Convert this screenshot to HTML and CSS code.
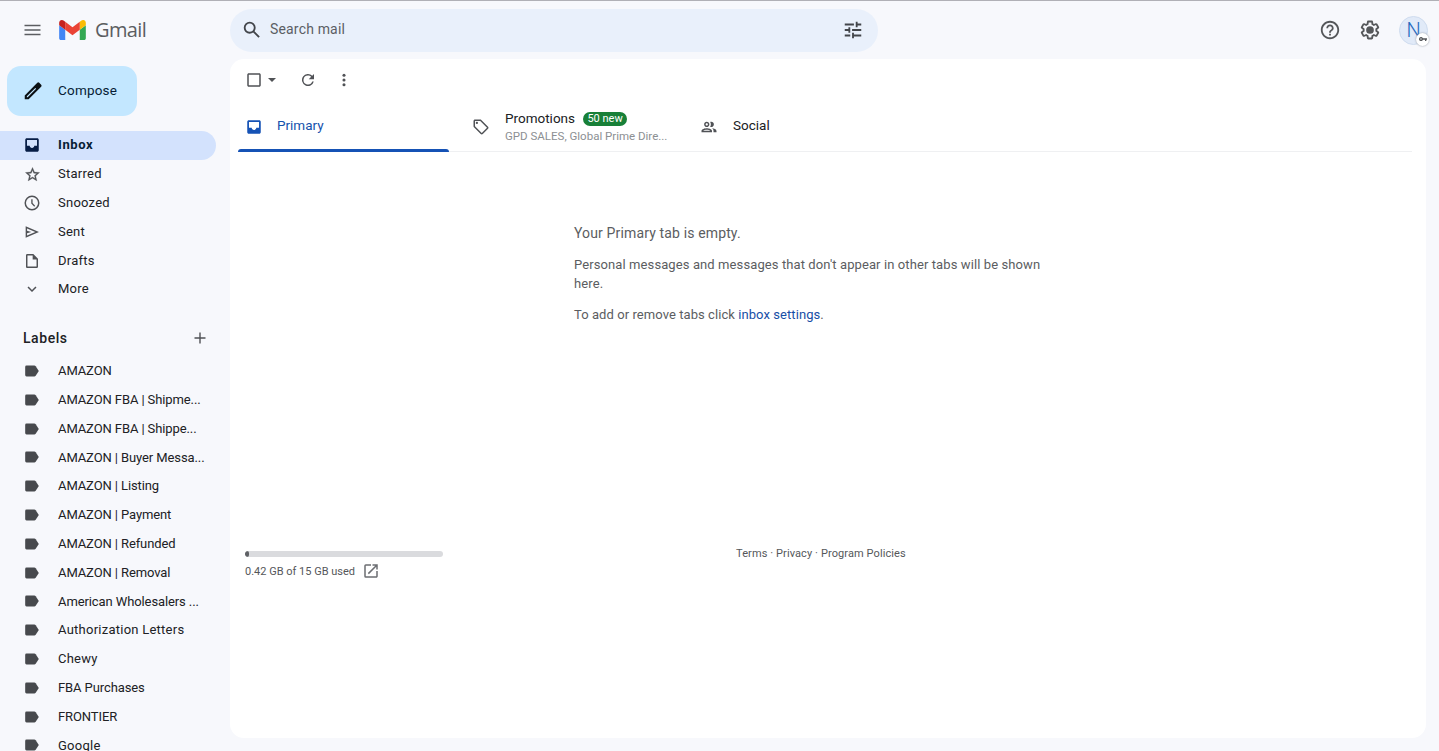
FILE: index.html
```html
<!DOCTYPE html>
<html lang="en">
<head>
<meta charset="utf-8">
<title>Gmail</title>
<link rel="stylesheet" href="styles.css">
</head>
<body>
<svg class="defs" aria-hidden="true">
  <symbol id="label" viewBox="0 0 14 12"><path d="M1.500 .6H9.300Q10.200 .6 10.700 1.300L13.800 6 10.700 10.700Q10.200 11.400 9.300 11.400H1.500Q.2 11.400 .2 10.100V1.900Q.2 .6 1.500 .6Z"/></symbol>
  <symbol id="inbox" viewBox="0 0 24 24"><path d="M19 3H5c-1.100 0-2 .9-2 2v14c0 1.100.9 2 2 2h14c1.100 0 2-.9 2-2V5c0-1.100-.9-2-2-2zm-.3 10H15c0 1.660-1.350 3-3 3s-3-1.340-3-3H5.300V5.300h13.400V13z"/></symbol>
</svg>
<div class="app">
  <header class="header">
    <div class="brand">
      <svg class="menu-icon" viewBox="0 0 18 14"><path d="M.5 2.500h16M.5 7h16M.5 11.500h16"/></svg>
      <svg class="logo" viewBox="52 42 88 66"><path fill="#4285f4" d="M58 108h14V74L52 59v43c0 3.320 2.690 6 6 6"/><path fill="#34a853" d="M120 108h14c3.320 0 6-2.690 6-6V59l-20 15"/><path fill="#fbbc04" d="M120 48v26l20-15v-8c0-7.420-8.470-11.650-14.400-7.200"/><path fill="#ea4335" d="M72 74V48l24 18 24-18v26L96 92"/><path fill="#c5221f" d="M52 51v8l20 15V48l-5.600-4.200c-5.940-4.450-14.400-.22-14.400 7.200"/></svg>
      <span class="wordmark">Gmail</span>
    </div>
    <div class="search">
      <svg class="icon search-icon" viewBox="0 0 24 24"><path d="M20.490 19l-5.730-5.730C15.530 12.200 16 10.910 16 9.500A6.500 6.500 0 1 0 9.500 16c1.410 0 2.700-.47 3.770-1.240L19 20.490 20.490 19zM5 9.500C5 7.010 7.010 5 9.500 5S14 7.010 14 9.500 11.990 14 9.500 14 5 11.990 5 9.500z"/></svg>
      <span class="search-text">Search mail</span>
      <svg class="icon tune-icon" viewBox="0 0 24 24"><path d="M3 17v2h6v-2H3zM3 5v2h10V5H3zm10 16v-2h8v-2h-8v-2h-2v6h2zM7 9v2H3v2h4v2h2V9H7zm14 4v-2H11v2h10zm-6-4h2V7h4V5h-4V3h-2v6z"/></svg>
    </div>
    <div class="account">
      <svg class="icon help" viewBox="0 0 24 24"><path d="M11 18h2v-2h-2v2zm1-16C6.480 2 2 6.480 2 12s4.480 10 10 10 10-4.480 10-10S17.520 2 12 2zm0 18c-4.410 0-8-3.590-8-8s3.590-8 8-8 8 3.590 8 8-3.590 8-8 8zm0-14c-2.210 0-4 1.790-4 4h2c0-1.100.9-2 2-2s2 .9 2 2c0 2-3 1.750-3 5h2c0-2.250 3-2.500 3-5 0-2.210-1.790-4-4-4z"/></svg>
      <svg class="icon gear" viewBox="0 0 24 24"><path d="M13.850 22.250h-3.700c-.74 0-1.360-.54-1.450-1.270l-.27-1.890c-.27-.14-.53-.29-.79-.46l-1.800.72c-.7.26-1.470-.03-1.810-.65L2.200 15.530c-.35-.66-.2-1.440.36-1.880l1.530-1.190c-.01-.15-.02-.3-.02-.46 0-.15.010-.31.020-.46l-1.520-1.190c-.59-.45-.74-1.260-.37-1.880l1.850-3.190c.34-.62 1.110-.9 1.790-.63l1.810.73c.26-.17.52-.32.780-.46l.27-1.910c.09-.7.710-1.250 1.440-1.250h3.700c.74 0 1.360.54 1.450 1.270l.27 1.890c.27.140.53.290.79.460l1.800-.72c.71-.26 1.480.03 1.820.65l1.840 3.180c.36.660.2 1.440-.36 1.880l-1.520 1.190c.01.150.02.300.02.460s-.01.310-.02.460l1.520 1.190c.56.450.72 1.230.37 1.860l-1.860 3.220c-.34.620-1.110.9-1.800.63l-1.800-.72c-.26.170-.52.320-.78.460l-.27 1.910c-.1.680-.72 1.220-1.460 1.220zm-3.230-2h2.760l.37-2.550.53-.22c.44-.18.880-.44 1.340-.78l.45-.34 2.380.96 1.380-2.400-2.030-1.580.07-.56c.03-.26.060-.51.060-.78s-.03-.53-.06-.78l-.07-.56 2.030-1.580-1.390-2.400-2.390.96-.45-.35c-.42-.32-.87-.58-1.330-.77l-.52-.22-.37-2.550h-2.760l-.37 2.550-.53.210c-.44.190-.88.440-1.340.79l-.45.330-2.380-.95-1.390 2.390 2.030 1.580-.07.56c-.03.260-.06.530-.06.790s.02.530.06.780l.07.56-2.030 1.580 1.380 2.400 2.390-.96.450.35c.43.330.86.580 1.330.77l.53.22.38 2.550z"/><circle cx="12" cy="12" r="4.200"/></svg>
      <div class="avatar">N<span class="key-badge"><svg viewBox="0 0 12 6"><path fill-rule="evenodd" d="M3 0a3 3 0 0 1 2.800 2H12v2h-1v2H9V4H5.800A3 3 0 1 1 3 0zM3 2a1 1 0 1 0 0 2 1 1 0 0 0 0-2z"/></svg></span></div>
    </div>
  </header>
  <div class="body">
    <aside class="sidebar">
      <button class="compose"><svg class="pencil" viewBox="0 0 24 24"><path fill-rule="evenodd" d="M3 16.800V21h4.200L20.900 7.300a1.500 1.500 0 0 0 0-2.100l-2.100-2.100a1.500 1.500 0 0 0-2.100 0L3 16.800zM5.300 18.800v-1L14.500 8.600l.9.900L6.200 18.800z"/></svg><span>Compose</span></button>
      <nav class="nav">
        <a class="row active"><svg class="icon"><use href="#inbox"/></svg><span>Inbox</span></a>
        <a class="row"><svg class="icon star" viewBox="0 0 24 24"><path d="M22 9.240l-7.190-.62L12 2 9.190 8.630 2 9.240l5.460 4.730L5.820 21 12 17.270 18.180 21l-1.630-7.030L22 9.240zM12 15.400l-3.760 2.270 1-4.280-3.320-2.880 4.380-.38L12 6.100l1.710 4.040 4.380.38-3.320 2.880 1 4.280L12 15.400z"/></svg><span class="lift">Starred</span></a>
        <a class="row"><svg class="icon" viewBox="0 0 24 24"><path d="M12 2a10 10 0 1 0 0 20 10 10 0 0 0 0-20zm0 18a8 8 0 1 1 0-16 8 8 0 0 1 0 16zM12.800 7H11v5.700l4 4.200 1.200-1.200-3.400-3.700z"/></svg><span>Snoozed</span></a>
        <a class="row"><svg class="icon small" viewBox="0 0 24 24"><path fill-rule="evenodd" d="M2.500 3.500v17L22.500 12zM4.600 6.700 17 12 4.600 17.300v-3.600L11 12l-6.400-1.700z"/></svg><span>Sent</span></a>
        <a class="row"><svg class="icon small" viewBox="0 0 24 24"><path d="M14 1.500H5a2 2 0 0 0-2 2v17c0 1.100.9 2 2 2h14a2 2 0 0 0 2-2V8.500zM5.200 20.300V3.700H13v6h5.800v10.600z"/></svg><span>Drafts</span></a>
        <a class="row"><svg class="icon" viewBox="0 0 24 24"><path d="M12 16l-6-6 1.410-1.410L12 13.170l4.590-4.590L18 10z"/></svg><span class="lift">More</span></a>
      </nav>
      <div class="labels-head"><h2>Labels</h2><svg viewBox="0 0 12 12"><path d="M6 .5v11M.5 6h11"/></svg></div>
      <nav class="nav labels">
        <a class="row caps"><svg class="tag"><use href="#label"/></svg><span>AMAZON</span></a>
        <a class="row caps"><svg class="tag"><use href="#label"/></svg><span>AMAZON FBA | Shipme...</span></a>
        <a class="row caps"><svg class="tag"><use href="#label"/></svg><span>AMAZON FBA | Shippe...</span></a>
        <a class="row caps"><svg class="tag"><use href="#label"/></svg><span>AMAZON | Buyer Messa...</span></a>
        <a class="row caps"><svg class="tag"><use href="#label"/></svg><span>AMAZON | Listing</span></a>
        <a class="row caps"><svg class="tag"><use href="#label"/></svg><span>AMAZON | Payment</span></a>
        <a class="row caps"><svg class="tag"><use href="#label"/></svg><span>AMAZON | Refunded</span></a>
        <a class="row caps"><svg class="tag"><use href="#label"/></svg><span>AMAZON | Removal</span></a>
        <a class="row caps"><svg class="tag"><use href="#label"/></svg><span>American Wholesalers ...</span></a>
        <a class="row"><svg class="tag"><use href="#label"/></svg><span>Authorization Letters</span></a>
        <a class="row"><svg class="tag"><use href="#label"/></svg><span>Chewy</span></a>
        <a class="row caps"><svg class="tag"><use href="#label"/></svg><span>FBA Purchases</span></a>
        <a class="row caps"><svg class="tag"><use href="#label"/></svg><span>FRONTIER</span></a>
        <a class="row"><svg class="tag"><use href="#label"/></svg><span>Google</span></a>
      </nav>
    </aside>
    <main class="panel">
      <div class="toolbar">
        <svg class="icon" viewBox="0 0 24 24"><path d="M19 5v14H5V5h14m0-2H5c-1.100 0-2 .9-2 2v14c0 1.100.9 2 2 2h14c1.100 0 2-.9 2-2V5c0-1.100-.9-2-2-2z"/></svg>
        <svg class="caret" viewBox="0 0 8 4"><path d="M0 0h8L4 4z"/></svg>
        <svg class="icon refresh" viewBox="0 0 24 24"><path d="M17.650 6.350A8 8 0 1 0 19.730 14h-2.080A6 6 0 1 1 12 6c1.660 0 3.140.69 4.220 1.780L13 11h7V4z"/></svg>
        <svg class="icon dots" viewBox="0 0 24 24"><circle cx="12" cy="5" r="2.300"/><circle cx="12" cy="12" r="2.300"/><circle cx="12" cy="19" r="2.300"/></svg>
      </div>
      <div class="tabs">
        <div class="tab selected"><svg class="icon"><use href="#inbox"/></svg><span>Primary</span></div>
        <div class="tab"><svg class="icon" viewBox="0 0 24 24"><path d="M21.410 11.580l-9-9C12.050 2.220 11.550 2 11 2H4c-1.100 0-2 .9-2 2v7c0 .55.220 1.050.59 1.420l9 9c.36.360.86.580 1.410.58s1.050-.22 1.410-.59l7-7c.37-.36.590-.86.590-1.410s-.23-1.060-.59-1.420zM13 20.010L4 11V4h7v-.01l9 9-7 7.020z"/><circle cx="6.500" cy="6.500" r="1.500"/></svg>
          <div class="tab-copy"><div class="tab-line"><span>Promotions</span><span class="pill">50 new</span></div><div class="senders">GPD SALES, Global Prime Dire...</div></div></div>
        <div class="tab"><svg class="icon people" viewBox="0 0 24 24"><path d="M9 12c1.930 0 3.500-1.570 3.500-3.500S10.930 5 9 5 5.500 6.570 5.500 8.500 7.070 12 9 12zm0-5c.83 0 1.500.67 1.500 1.500S9.830 10 9 10s-1.500-.67-1.500-1.500S8.170 7 9 7zm0 6.750c-2.340 0-7 1.170-7 3.500V19h14v-1.750c0-2.330-4.660-3.500-7-3.500zM4.340 17c.84-.58 2.870-1.250 4.660-1.250s3.820.67 4.660 1.250H4.340zm11.700-3.190c1.160.84 1.960 1.960 1.960 3.440V19h4v-1.750c0-2.020-3.500-3.170-5.960-3.440zM15 12c1.930 0 3.500-1.570 3.500-3.500S16.930 5 15 5c-.54 0-1.040.13-1.500.35.63.89 1 1.980 1 3.150s-.37 2.260-1 3.150c.46.220.96.350 1.500.35z"/></svg><span>Social</span></div>
      </div>
      <section class="empty">
        <p class="lead">Your Primary tab is empty.</p>
        <p class="detail">Personal messages and messages that don't appear in other tabs will be shown<br>here.</p>
        <p class="hint">To add or remove tabs click <a>inbox settings</a>.</p>
      </section>
      <footer class="footer">
        <div class="storage">
          <div class="meter"><i></i></div>
          <div class="usage"><span>0.42 GB of 15 GB used</span><svg class="icon" viewBox="0 0 24 24"><path d="M19 19H5V5h7V3H5a2 2 0 0 0-2 2v14a2 2 0 0 0 2 2h14c1.100 0 2-.9 2-2v-7h-2v7zM14 3v2h3.590l-9.830 9.830 1.410 1.410L19 6.410V10h2V3h-7z"/></svg></div>
        </div>
        <div class="legal">Terms · Privacy · Program Policies</div>
      </footer>
    </main>
  </div>
</div>
</body>
</html>
```
FILE: styles.css
```css
* { box-sizing: border-box; }
body { margin: 0; background: #f7f8fc; font-family: Roboto, "Liberation Sans", sans-serif; color: #202124; overflow: hidden; }
h2, p { margin: 0; }
svg { display: block; flex: none; }
.defs { display: none; }
.icon { width: 18px; height: 18px; fill: #505256; }
.app { height: 751px; overflow: hidden; border-top: 1px solid #b0b0b6; display: flex; flex-direction: column; }

.header { height: 58px; flex: none; display: flex; align-items: center; }
.brand { width: 230px; padding-left: 24px; display: flex; align-items: center; }
.menu-icon { width: 18px; height: 14px; stroke: #5b5d61; stroke-width: 1.5; }
.logo { width: 27px; height: 20px; margin-left: 17px; }
.wordmark { margin-left: 9px; font: 500 20px/24px "Open Sans", sans-serif; color: #5b5d61; letter-spacing: -.6px; }
.search { width: 648px; height: 43px; padding: 0 16px 0 11px; border-radius: 22px; background: #e9f0fb; display: flex; align-items: center; }
.search-icon { width: 22px; height: 22px; fill: #42454a; margin-right: 7px; }
.search-text { font-size: 14px; color: #5b5e64; letter-spacing: .17px; padding-bottom: 2px; }
.tune-icon { width: 22px; height: 22px; fill: #42454a; margin-left: auto; margin-right: -2px; }
.account { margin-left: auto; padding-right: 11px; display: flex; align-items: center; }
.help, .gear { width: 22px; height: 22px; fill: #55575a; }
.gear { margin-left: 18px; }
.avatar { position: relative; width: 29px; height: 29px; margin-left: 18px; border: 1px solid #cfdcef; border-radius: 50%; background: #e1eaf8; color: #2468bd; font-size: 20px; font-weight: 300; line-height: 26px; text-align: center; }
.key-badge { position: absolute; right: -2px; bottom: -2px; width: 13px; height: 13px; border-radius: 50%; background: #fff; box-shadow: 0 0 2px #8b909a; display: grid; place-items: center; }
.key-badge svg { width: 8px; height: 4px; fill: #55575a; }

.body { flex: 1; min-height: 0; display: flex; align-items: flex-start; }
.sidebar { width: 230px; flex: none; padding-top: 7px; }
.compose { display: flex; align-items: center; gap: 14px; width: 130px; height: 50px; margin: 0 0 15px 7px; padding: 0 0 0 15px; border: 0; border-radius: 14px; background: #c3e7ff; color: #071d35; font: 400 13.500px/18px Roboto, sans-serif; letter-spacing: .2px; }
.compose span { padding-bottom: 2px; }
.pencil { width: 22px; height: 22px; fill: #0b1013; }
.nav { width: 216px; }
.row { height: 28.800px; padding-left: 23px; display: flex; align-items: center; font-size: 13px; white-space: nowrap; letter-spacing: .25px; }
.row span { margin-left: 17px; padding-bottom: 1px; }
.labels .row span { padding-bottom: .4px; }
.row .lift { padding-bottom: 2px; }
.row.caps { letter-spacing: -.1px; }
.row.active { color: #071d35; background: #d3e2fd; border-radius: 0 15px 15px 0; font-weight: 700; letter-spacing: .6px; }
.row.active span { padding-bottom: 2px; }
.row.active .icon { fill: #071d45; }
.icon.small { width: 16px; height: 16px; margin: 0 1px; }
.icon.star { width: 17px; height: 17px; margin: 1px .5px 0; stroke: #505256; stroke-width: .4; }
.tag { width: 14px; height: 12px; fill: #47494d; margin: 0 2px 0 2px; }
.labels-head { height: 52.800px; padding: 16px 24px 0 23px; display: flex; align-items: center; justify-content: space-between; }
.labels-head h2 { font-size: 14px; font-weight: 500; letter-spacing: .55px; }
.labels-head svg { width: 12px; height: 12px; stroke: #505256; stroke-width: 1.400; }

.panel { width: 1196px; height: 679px; border-radius: 14px; background: #fff; }
.toolbar { height: 42px; padding-left: 15px; display: flex; align-items: center; }
.caret { width: 8px; height: 4px; margin-left: 5px; fill: #505256; }
.refresh { margin-left: 23px; }
.dots { width: 16px; height: 16px; margin-left: 19px; }
.tabs { height: 51px; margin: 0 14px 0 8px; border-bottom: 1px solid #eff0f2; display: flex; }
.tab { position: relative; width: 228px; height: 51px; padding-left: 7px; display: flex; align-items: center; font-size: 13.500px; letter-spacing: 0; }
.tab > span { margin-left: 14px; padding-bottom: 3px; }
.tab > .people + span { margin-left: 15px; }
.tab.selected { width: 227px; color: #1552ad; }
.tab.selected .icon { fill: #1552b5; }
.tab.selected::after { content: ""; position: absolute; left: 0; bottom: 0; width: 211px; height: 3px; background: #1552b5; border-radius: 3px 3px 0 0; }
.tab-copy { margin-left: 15px; }
.tab-line { display: flex; align-items: center; height: 17px; gap: 8px; }
.tab-line > span:first-child { padding-top: 1px; }
.pill { height: 14px; width: 44px; border-radius: 7px; background: #188038; color: #fff; font-size: 11px; line-height: 14px; text-align: center; margin-top: 2px; }
.senders { font-size: 11.500px; line-height: 16px; color: #8c8f93; white-space: nowrap; margin-top: 2px; }

.empty { padding: 70px 0 0 344px; height: 391px; color: #5b5d61; }
.empty p { white-space: nowrap; }
.lead { font-size: 14px; line-height: 22px; letter-spacing: .14px; }
.detail { font-size: 13px; line-height: 19px; margin-top: 11px; letter-spacing: .1px; }
.hint { font-size: 13px; line-height: 19px; margin-top: 12px; letter-spacing: .07px; }
.hint a { color: #174ea6; }
.footer { display: flex; padding-left: 15px; color: #55575a; font-size: 11px; }
.storage { width: 198px; padding-top: 8px; }
.meter { height: 6px; border-radius: 3px; background: #dadbde; overflow: hidden; }
.meter i { display: block; width: 4px; height: 6px; border-radius: 2px; background: #5f6165; }
.usage { display: flex; align-items: center; height: 18px; margin-top: 5px; white-space: nowrap; }
.usage .icon { margin-left: 7px; fill: #6c6e72; }
.legal { margin-left: 293px; padding-top: 2px; line-height: 18px; white-space: nowrap; letter-spacing: .1px; }
```
